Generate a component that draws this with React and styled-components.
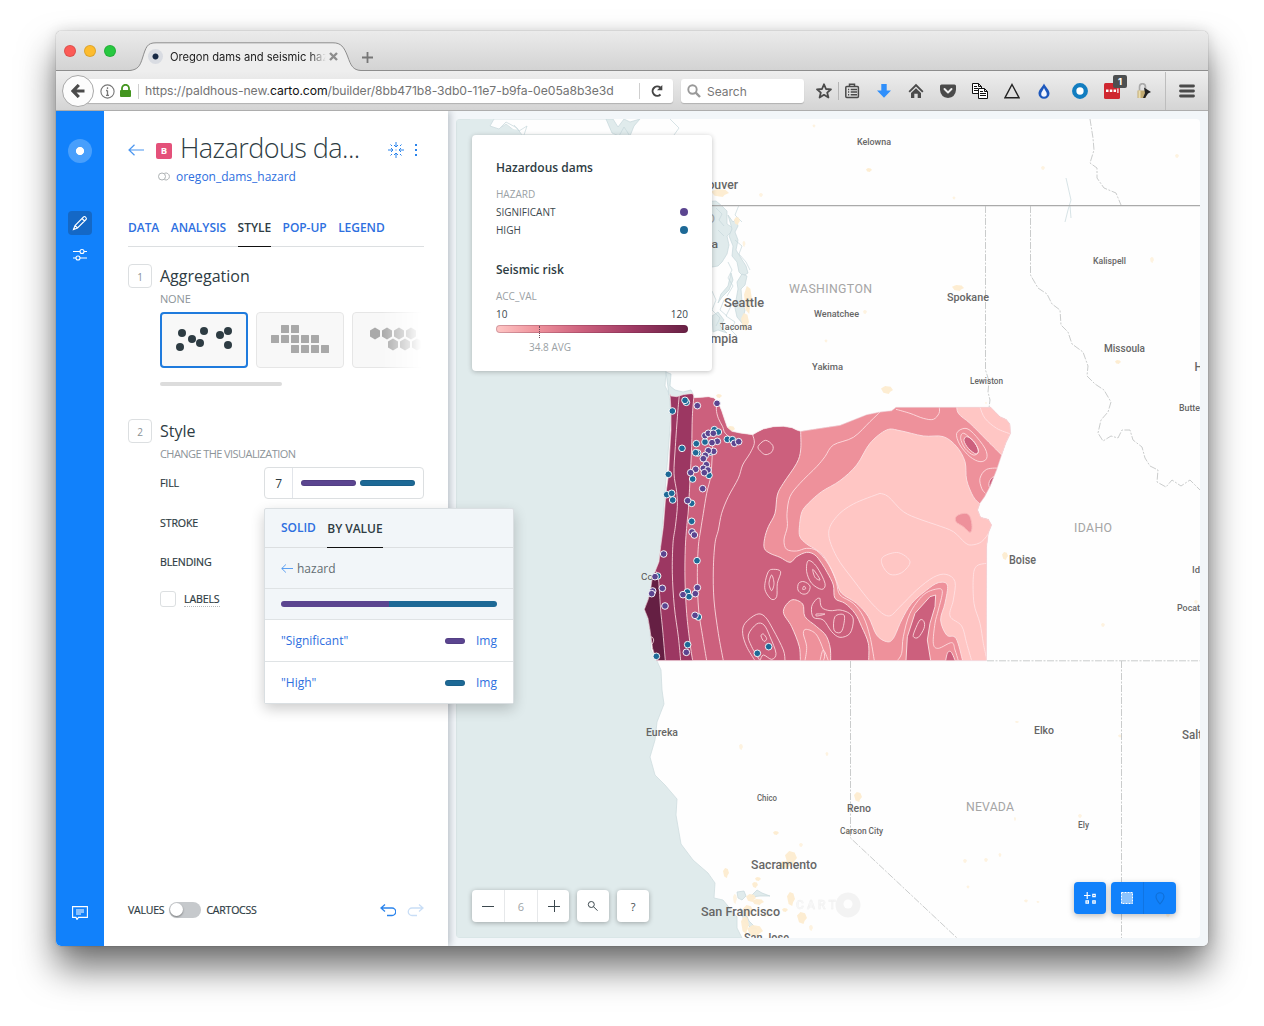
import React from "react";
import styled, { createGlobalStyle, css } from "styled-components";

const PURPLE = "#5b4590";
const TEAL = "#1d6996";
const BLUE = "#1181fb";
const LINK = "#2e6fe0";
const sans = `"Open Sans", "Noto Sans", sans-serif`;
const system = `Inter, "Liberation Sans", sans-serif`;

const Global = createGlobalStyle`
  * { box-sizing: border-box; }
  html, body { margin: 0; background: #fff; }
  body { height: 1026px; overflow: hidden; font-family: ${sans}; color: #2e3c43; }
  svg { display: block; flex: none; }
`;

const Desktop = styled.main`
  width: 1264px;
  height: 1026px;
  padding: 31px 56px 0;
`;

const Window = styled.div`
  width: 1152px;
  height: 915px;
  display: flex;
  flex-direction: column;
  border-radius: 5px;
  box-shadow: 0 0 1px rgba(0, 0, 0, 0.55), 0 0 14px rgba(0, 0, 0, 0.12), 0 22px 36px rgba(0, 0, 0, 0.56);
`;

/* ---------- browser chrome ---------- */

const TitleBar = styled.div`
  height: 40px;
  flex: none;
  display: flex;
  align-items: flex-end;
  border-radius: 5px 5px 0 0;
  border-bottom: 1px solid #8d8d8d;
  background: linear-gradient(#ebebeb, #d3d3d3);
  font-family: ${system};
`;

const Lights = styled.div`
  display: flex;
  gap: 8px;
  width: 74px;
  padding: 0 0 13px 8px;
`;

const Light = styled.i`
  width: 12px;
  height: 12px;
  border-radius: 50%;
  background: ${(p) => p.$color};
  border: 1px solid rgba(0, 0, 0, 0.12);
`;

const BrowserTab = styled.div`
  position: relative;
  width: 232px;
  height: 29px;
  margin-bottom: -1px;
  display: flex;
  align-items: center;
  padding-left: 18px;
  > * { position: relative; }
  > svg:first-child { position: absolute; left: 0; top: 0; }
`;

const Favicon = styled.i`
  width: 15px;
  height: 15px;
  margin-right: 7px;
  border-radius: 50%;
  background: radial-gradient(circle, #162945 0 2.6px, #d9dce2 3.4px);
`;

const TabTitle = styled.span`
  width: 159px;
  white-space: nowrap;
  font-size: 11.2px;
  letter-spacing: -0.04px;
  color: #222;
  mask-image: linear-gradient(90deg, #000 88%, transparent 98%);
`;

const NewTab = styled.div`
  padding: 0 0 7px;
`;

const Toolbar = styled.div`
  height: 40px;
  flex: none;
  display: flex;
  align-items: center;
  padding: 1px 0 0 6px;
  background: linear-gradient(#eeeeee, #d4d4d4);
  border-bottom: 1px solid #adadad;
  font-family: ${system};
`;

const Back = styled.div`
  width: 32px;
  height: 32px;
  border-radius: 50%;
  display: grid;
  place-items: center;
  border: 1px solid #a9a9a9;
  background: #fcfcfc;
  z-index: 1;
`;

const Address = styled.div`
  height: 24px;
  width: 589px;
  margin-left: -10px;
  padding-left: 16px;
  display: flex;
  align-items: center;
  border-radius: 3px;
  background: #fff;
  box-shadow: 0 1px 1px rgba(0, 0, 0, 0.18);
`;

const Url = styled.span`
  width: 500px;
  padding-left: 6px;
  font-size: 12.2px;
  line-height: 22px;
  letter-spacing: -0.07px;
  color: #737373;
  white-space: nowrap;
  b { font-weight: 400; color: #111; }
`;

const Divider = styled.i`
  width: 1px;
  height: ${(p) => p.$h || 16}px;
  margin: 0 ${(p) => p.$gap || 0}px;
  background: ${(p) => p.$color || "#cfcfcf"};
`;

const Search = styled.div`
  width: 123px;
  height: 24px;
  margin: 0 8px;
  padding-left: 6px;
  display: flex;
  gap: 6px;
  align-items: center;
  background: #fff;
  border-radius: 3px;
  box-shadow: 0 1px 1px rgba(0, 0, 0, 0.18);
  font-size: 12px;
  color: #777;
`;

const Tool = styled.div`
  position: relative;
  width: ${(p) => p.$w || 32}px;
  margin-left: ${(p) => p.$ml || 0}px;
  height: 32px;
  display: grid;
  place-items: center;
`;

const Count = styled.span`
  position: absolute;
  top: 0;
  right: 1px;
  width: 14px;
  height: 13px;
  border-radius: 2px;
  background: #4d4f50;
  color: #fff;
  font: 700 9.5px/13px ${system};
  text-align: center;
`;

/* ---------- app shell ---------- */

const Body = styled.div`
  flex: 1;
  min-height: 0;
  display: flex;
  background: #f2f6f9;
  border-radius: 0 0 5px 5px;
`;

const Rail = styled.nav`
  width: 48px;
  display: flex;
  flex-direction: column;
  align-items: center;
  padding: 28px 0 21px;
  background: ${BLUE};
  border-radius: 0 0 0 5px;
`;

const Logo = styled.i`
  width: 24px;
  height: 24px;
  border-radius: 50%;
  background: radial-gradient(circle, #fff 0 3.7px, #489ffc 4.4px);
  margin-bottom: 48px;
`;

const RailButton = styled.div`
  width: 24px;
  height: 24px;
  display: grid;
  place-items: center;
  margin-bottom: 8px;
  border-radius: 4px;
  background: ${(p) => (p.$active ? "#1468c6" : "none")};
  ${(p) => p.$last && css`margin: auto 0 0;`}
`;

const Panel = styled.section`
  position: relative;
  z-index: 2;
  width: 344px;
  padding: 20px 24px 0;
  display: flex;
  flex-direction: column;
  background: #fff;
  box-shadow: 2px 0 7px rgba(0, 20, 40, 0.24);
  clip-path: inset(0 -80px 0 0);
`;

const Heading = styled.header`
  height: 34px;
  display: flex;
  align-items: center;
  > svg { margin-top: 4px; }
`;

const Letter = styled.span`
  width: 16px;
  height: 16px;
  margin: 5px 8px 0 12px;
  border-radius: 2px;
  background: #e4517a;
  color: #fff;
  font: 700 9.5px/16px ${sans};
  text-align: center;
`;

const Title = styled.h1`
  width: 208px;
  margin: 0;
  font: 300 27px/34px ${sans};
  letter-spacing: -0.56px;
  color: #2e3c43;
  white-space: nowrap;
`;

const Source = styled.div`
  display: flex;
  align-items: center;
  gap: 6px;
  height: 20px;
  margin-top: 1px;
  padding-left: 30px;
  font-size: 12px;
  color: ${LINK};
`;

const Tabs = styled.div`
  display: flex;
  gap: 11.5px;
  height: ${(p) => p.$h || 38}px;
  padding: 0 ${(p) => p.$pad || 0}px;
  border-bottom: 1px solid #dcdfe1;
`;

const Tab = styled.span`
  height: ${(p) => p.$h || 38}px;
  line-height: ${(p) => p.$h || 38}px;
  font-size: 12px;
  font-weight: 600;
  letter-spacing: -0.05px;
  font-kerning: normal;
  white-space: nowrap;
  color: ${(p) => (p.$active ? "#2e3c43" : LINK)};
  border-bottom: ${(p) => (p.$active ? "1px solid #111" : "0")};
`;

const TallTab = styled(Tab)`
  height: 61px;
  padding-top: 33px;
  line-height: 18px;
`;

const Section = styled.div`
  display: grid;
  grid-template-columns: 24px 264px;
  column-gap: 8px;
  margin-top: ${(p) => p.$mt}px;
`;

const Step = styled.span`
  width: 24px;
  height: 24px;
  border: 1px solid #dcdfe1;
  border-radius: 4px;
  font-size: 10px;
  line-height: 24px;
  text-align: center;
  color: #8a9196;
`;

const SectionTitle = styled.h2`
  margin: 0;
  font-weight: 400;
  font-size: 16px;
  line-height: 24px;
  letter-spacing: 0;
`;

const Caption = styled.div`
  font-size: 11px;
  line-height: 16px;
  margin-top: 3px;
  letter-spacing: ${(p) => p.$track || -0.16}px;
  color: #8d9499;
`;

const Cards = styled.div`
  display: flex;
  gap: 8px;
  height: 56px;
  margin-top: 5px;
  overflow: hidden;
  mask-image: linear-gradient(90deg, #000 84%, transparent 99%);
`;

const Card = styled.div`
  width: 88px;
  height: 56px;
  flex: none;
  border-radius: 4px;
  background: #f8f8f8;
  border: ${(p) => (p.$active ? "2px solid #1f7bdd" : "1px solid #e6e6e6")};
  display: grid;
  place-items: center;
`;

const Thumb = styled.i`
  display: block;
  width: 122px;
  height: 4px;
  margin-top: 14px;
  border-radius: 2px;
  background: #dcdcdc;
`;

const Field = styled.div`
  height: ${(p) => p.$h || 40}px;
  display: flex;
  align-items: center;
  font-size: 10.6px;
  font-weight: 500;
  letter-spacing: -0.13px;
  -webkit-text-stroke: 0.2px currentColor;
`;

const FieldName = styled.span`
  width: 104px;
`;

const FillInput = styled.div`
  width: 160px;
  height: 32px;
  display: flex;
  align-items: center;
  border: 1px solid #dcdfe1;
  border-radius: 4px;
  gap: 4px;
  -webkit-text-stroke: 0;
`;

const FillSize = styled.span`
  width: 28px;
  height: 30px;
  margin-right: 4px;
  line-height: 31px;
  text-align: center;
  font-size: 12px;
  border-right: 1px solid #e2e5ea;
`;

const Bar = styled.i`
  width: ${(p) => p.$w}px;
  height: 6px;
  border-radius: 3px;
  background: ${(p) => p.$color};
  box-shadow: inset 0 0 0 1px rgba(0, 0, 0, 0.08);
`;

const Checkbox = styled.i`
  width: 16px;
  height: 16px;
  border: 1px solid #dcdfe1;
  border-radius: 3px;
  margin-right: 8px;
`;

const Hinted = styled.span`
  line-height: 14px;
  border-bottom: 1px dotted #b5babd;
`;

const Footer = styled.footer`
  display: flex;
  align-items: center;
  margin-top: auto;
  height: 24px;
  margin-bottom: 24px;
  font-size: 10.5px;
  font-weight: 500;
  letter-spacing: -0.2px;
  -webkit-text-stroke: 0.2px currentColor;
`;

const Switch = styled.i`
  width: 32px;
  height: 16px;
  margin: 0 5px;
  border-radius: 8px;
  background: #c6c9cc;
  &::before {
    content: "";
    display: block;
    width: 13px;
    height: 13px;
    margin: 1px;
    border-radius: 50%;
    background: #fff;
    box-shadow: 0 1px 2px rgba(0, 0, 0, 0.4);
  }
`;

const History = styled.div`
  margin-left: auto;
  display: flex;
  gap: 11px;
`;

const Popover = styled.div`
  position: absolute;
  left: 160px;
  top: 397px;
  width: 250px;
  height: 196px;
  border: 1px solid #dadfe2;
  border-radius: 2px;
  background: #f2f6f9;
  box-shadow: 0 5px 14px rgba(0, 0, 0, 0.2);
`;

const PopRow = styled.div`
  height: ${(p) => p.$h}px;
  padding: 0 16px;
  display: flex;
  align-items: center;
  gap: ${(p) => p.$gap || 0}px;
  border-bottom: ${(p) => (p.$last ? 0 : "1px solid #dfe3e5")};
  background: ${(p) => (p.$white ? "#fff" : "none")};
  font-size: 12px;
  color: ${(p) => (p.$white ? LINK : "#636d72")};
`;

const Ramp = styled.i`
  width: 216px;
  height: 6px;
  border-radius: 3px;
  background: linear-gradient(90deg, ${PURPLE} 50%, ${TEAL} 50%);
`;

const Value = styled.span`
  flex: 1;
`;

/* ---------- map ---------- */

const MapFrame = styled.section`
  position: relative;
  width: 744px;
  height: 819px;
  margin: 8px;
  overflow: hidden;
  border-radius: 4px;
  background: #fefefe;
  > svg { font-family: Roboto, "Liberation Sans", sans-serif; }
`;

const Legend = styled.aside`
  position: absolute;
  left: 16px;
  top: 16px;
  width: 240px;
  height: 236px;
  padding: 23px 24px;
  border-radius: 4px;
  background: #fff;
  box-shadow: 0 1px 5px rgba(0, 0, 0, 0.24);
`;

const LegendTitle = styled.h3`
  margin: 0 0 7px;
  font-size: 12px;
  line-height: 20px;
  font-weight: 600;
`;

const LegendGap = styled.div`
  height: 21px;
`;

const LegendRow = styled.div`
  height: 18px;
  display: flex;
  align-items: center;
  justify-content: space-between;
  font-size: 10px;
  color: ${(p) => (p.$muted ? "#9aa1a5" : "#3c484e")};
`;

const Dot = styled.i`
  width: 8px;
  height: 8px;
  border-radius: 50%;
  background: ${(p) => p.$color};
`;

const RiskRamp = styled.div`
  height: 8px;
  margin-top: 2px;
  border-radius: 4px;
  border: 1px solid rgba(90, 30, 60, 0.25);
  background: linear-gradient(90deg, #ffc6c4, #ee919b 22%, #cc607d 45%, #9e3963 72%, #672044) border-box;
`;

const Average = styled.div`
  width: 48px;
  margin-left: 30px;
  font-size: 10px;
  line-height: 14px;
  text-align: center;
  white-space: nowrap;
  color: #9aa1a5;
  &::before {
    content: "";
    display: block;
    height: 12px;
    margin: -7px 0 2px 13px;
    border-left: 1px dotted #6b4a58;
  }
`;

const Controls = styled.div`
  position: absolute;
  bottom: 16px;
  left: 16px;
  display: flex;
  gap: 8px;
`;

const ControlGroup = styled.div`
  display: flex;
  height: 32px;
  border-radius: 4px;
  background: #fff;
  box-shadow: 0 1px 5px rgba(0, 0, 0, 0.3);
  font-size: 11px;
`;

const Control = styled.span`
  width: ${(p) => p.$w || 32}px;
  display: grid;
  place-items: center;
  color: ${(p) => (p.$muted ? "#a0a5a8" : "#3c484e")};
  & + & { border-left: 1px solid #e6e8ea; }
`;

const Modes = styled.div`
  position: absolute;
  right: 24px;
  bottom: 24px;
  display: flex;
  gap: 5px;
`;

const ModeGroup = styled.div`
  display: flex;
  height: 32px;
  border-radius: 4px;
  background: ${BLUE};
  box-shadow: 0 2px 6px rgba(0, 0, 0, 0.26);
`;

const Mode = styled.span`
  width: ${(p) => p.$w || 32}px;
  display: grid;
  place-items: center;
  & + & { border-left: 1px solid #1074e2; }
`;

/* smooth curve through a list of points, closed or open */
function smooth(points, close = true) {
  const n = points.length;
  const at = (i) => (close ? points[(i + n) % n] : points[Math.max(0, Math.min(n - 1, i))]);
  let d = `M${points[0][0]} ${points[0][1]}`;
  const last = close ? n : n - 1;
  for (let i = 0; i < last; i++) {
    const [p0, p1, p2, p3] = [at(i - 1), at(i), at(i + 1), at(i + 2)];
    d += `C${p1[0] + (p2[0] - p0[0]) / 6} ${p1[1] + (p2[1] - p0[1]) / 6} ${p2[0] - (p3[0] - p1[0]) / 6} ${p2[1] - (p3[1] - p1[1]) / 6} ${p2[0]} ${p2[1]}`;
  }
  return close ? d + "Z" : d;
}
const pts = (s) => s.split(" ").map((p) => p.split(",").map(Number));
const line = (s) => smooth(pts(s), false);
const blob = (s) => smooth(pts(s), true);

const OREGON =
  "M90 42L93 48L110 50L130 44L158 40L163 53L185 52L205 50L222 54L234 66L245 92L255 122L262 142L276 154L300 159L338 164L352 156L370 147L400 140L430 139L456 143L470 150L482 154L540 145L600 136L640 120L680 104L720 96L755 92L768 82L1052 82L1066 96L1080 110L1098 118L1110 132L1112 160L1098 188L1085 225L1070 270L1050 320L1034 350L1020 370L1013 390L1022 412L1045 418L1055 435L1045 460L1040 500L1039 842L50 842L38 806L30 750L24 715L13 688L24 660L30 640L36 600L48 568L57 545L62 500L70 440L78 340L86 280L90 200L93 150L93 90Z";

const LINE_A = "118,45 113,100 106,200 102,280 110,335 112,380 106,440 99,490 97,580 103,680 115,770 122,842";
const LINE_B = "162,45 157,110 155,200 150,300 145,390 142,420 136,500 135,600 140,700 150,790 158,842";
const LINE_C = "218,190 216,240 212,290 200,340 190,400 182,450 175,500 172,590 176,690 188,770 200,842";
const LINE_D = "338,164 343,190 330,220 308,255 295,295 265,350 245,400 235,450 225,490 220,570 222,660 235,760 250,842";

const MEDIUM =
  line("482,154 482,210 470,250 430,310 412,345 405,400 385,440 374,475 373,505 390,520 420,532 450,547 470,530 500,517 525,525 545,550 562,578 580,615 585,655 615,670 645,700 665,740 685,790 686,842") +
  "L798 842L802 770L825 700L870 650L887 645L885 680L870 730L862 780L872 842L1080 842L1180 400L1160 20L482 20Z";

const LIGHT =
  line("479,430 486,395 505,370 545,335 600,302 650,255 690,190 740,150 780,152 850,168 910,170 950,200 975,245 980,300 1000,350 1022,374") +
  "L1070 374L1070 842L968 842" +
  line("968,842 948,775 920,765 902,720 915,670 922,615 895,608 860,630 815,670 785,720 760,775 740,785 710,765 685,710 650,670 605,640 590,605 570,560 552,530 530,510 500,492 479,468 479,430").replace("M968 842", "L968 842") +
  "Z";

const CONTOURS = [
  LINE_A, LINE_B, LINE_C, LINE_D,
  "232,62 229,88 235,115 248,140 256,160 285,182 300,184",
  "720,96 690,125 640,172 580,195 555,230 530,260 480,310 450,350 441,400 442,440 432,480 440,508 470,513 500,505 530,512 560,545 580,580 590,610 600,645 640,670 670,710 690,770 703,842",
  "720,340 640,372 590,410 566,460 590,530 640,600 700,675 745,708 780,680 830,630 880,592 918,583 945,605 940,660 930,708 965,738 980,790 995,842",
  "720,340 745,350 790,395 840,418 890,435 940,455 975,488 995,495 1025,485 1050,455",
  "768,88 810,100 850,115 880,118 897,100 898,82",
  "1020,82 1035,115 1070,145 1112,162",
  "1085,264 1040,268 1020,295 1025,325 1036,340",
  "1039,550 1010,558 1000,590 1002,670 1020,730 1030,790 1039,832",
  "772,842 785,820 790,770 810,700 850,645 890,627 907,635 895,690 885,730 880,790 895,805 935,788 945,810 955,842",
  "345,842 320,800 308,760 315,730 350,703 375,710 400,750 430,810 435,842",
  "360,842 335,800 325,765 350,732 372,735 390,770 408,820 395,838 370,825 360,842",
  "495,842 500,800 490,760 500,748 530,765 553,820 550,842",
  "540,655 530,657 515,680 520,712 550,720 575,755 600,772 630,760 640,720 628,700 600,690 570,692 545,682 540,655",
  "528,702 555,702 530,708 528,702",
  "540,842 550,810 565,842",
];

const RINGS = [
  "376,181 398,196 396,215 378,224 364,216 354,200",
  "400,568 422,575 412,610 410,650 395,658 377,635 375,610 385,575",
  "395,585 402,610 395,632 387,610",
  "505,542 530,560 555,610 545,628 515,610 500,575",
  "518,568 530,582 540,600 525,592",
  "492,605 510,618 504,638 488,642 474,630 476,610",
  "492,618 497,626 488,628",
  "730,530 775,518 810,545 785,578 750,583 727,555",
  "585,710 612,705 610,740 600,758 582,750",
  "840,720 825,750 820,770 835,772 852,745 852,725",
  "975,145 950,160 960,195 990,230 1020,245 1040,235 1035,205 1000,160",
  "972,160 962,175 975,205 1000,225 1015,215 1005,190",
  "35,770 41,780 36,792 32,780",
  "370,762 380,776 372,784 363,768",
];

const TEAL_DAMS = pts(
  "97,93 139,67 135,61 126,205 169,191 195,186 223,149 235,156 262,178 277,179 173,219 167,218 212,216 207,286 158,297 85,283 80,344 95,340 98,360 155,370 155,424 171,542 53,588 142,636 147,650 175,711 143,794 49,829 386,800 352,820"
);
const PURPLE_DAMS = pts(
  "172,77 231,70 195,167 205,160 220,160 232,184 216,188 283,190 296,185 221,214 205,212 196,226 190,236 199,254 190,265 204,270 193,278 167,268 152,278 188,326 143,362 156,456 163,465 71,522 45,590 38,633 35,641 67,625 75,678 172,623 166,641 129,644 165,706 139,817"
);

/* text, x, baseline, width, size */
const PLACES = [
  ["Kelowna", 857, 145, 34, 9.8],
  ["Vancouver", 680, 189, 58, 12.3],
  ["Victoria", 676, 248, 42, 11.3],
  ["Seattle", 724, 307, 40, 13],
  ["Tacoma", 720, 330, 32, 9.8],
  ["Olympia", 693, 343, 45, 12],
  ["Wenatchee", 814, 317, 45, 9.8],
  ["Yakima", 812, 370, 31, 9.8],
  ["Spokane", 947, 301, 42, 11.3],
  ["Lewiston", 970, 384, 33, 9.8],
  ["Kalispell", 1093, 264, 33, 9.8],
  ["Missoula", 1104, 352, 41, 11.3],
  ["H", 1194.5, 371, 8, 12.3],
  ["Butte", 1179, 411, 21, 9.8],
  ["Boise", 1009, 564, 27, 12.3],
  ["Id", 1192, 573, 8, 9.8],
  ["Pocat", 1177, 611, 23, 9.8],
  ["Salt", 1182, 739, 20, 12.3],
  ["Elko", 1034, 734, 20, 11.3],
  ["Ely", 1078, 828, 11, 9.8],
  ["Reno", 847, 812, 24, 11.3],
  ["Carson City", 840, 834, 43, 9.8],
  ["Chico", 757, 801, 20, 9.8],
  ["Eureka", 646, 736, 32, 11.3],
  ["Sacramento", 751, 869, 66, 12.3],
  ["San Francisco", 701, 916, 79, 13],
  ["San Jose", 744, 942, 45, 12.3],
];
const STATES = [
  ["WASHINGTON", 789, 293, 83],
  ["IDAHO", 1074, 532, 38],
  ["NEVADA", 966, 811, 48],
];

/* built-up areas: x, y, half width, half height */
const TOWNS = [
  [748, 300, 4, 14], [745, 322, 4, 9], [720, 193, 9, 4], [737, 221, 3, 4], [761, 195, 2, 2], [744, 244, 1.5, 3], [887, 390, 6, 4],
  [869, 170, 3, 2], [1043, 168, 2, 2], [1177, 156, 2, 2], [954, 198, 1.5, 1.5], [814, 126, 1.5, 1.5], [958, 288, 6, 3], [1005, 556, 3, 4],
  [1152, 260, 2, 3], [1118, 362, 3, 2], [719, 396, 3, 2], [731, 429, 4, 3], [986, 403, 1, 1], [865, 312, 2, 2], [826, 341, 1.5, 1.5],
  [741, 747, 2, 3], [827, 754, 1.5, 2], [776, 833, 3, 2], [791, 858, 6, 7], [785, 865, 6, 4], [801, 845, 2, 2], [726, 873, 3, 5],
  [758, 879, 3, 2], [755, 885, 3, 3], [735, 899, 2, 5], [751, 898, 5, 4], [758, 902, 6, 3], [748, 911, 5, 6], [791, 899, 4, 7],
  [802, 918, 5, 6], [811, 928, 2, 3], [785, 910, 3, 2], [745, 925, 4, 9], [755, 931, 8, 6], [765, 915, 2, 2], [858, 797, 4, 5], [849, 832, 3, 3],
  [986, 860, 2, 2], [1000, 855, 1.5, 2], [965, 861, 2, 2], [968, 887, 1.5, 1.5], [1026, 901, 2, 1.5], [1038, 902, 1.5, 1],
  [1080, 816, 2, 2], [1017, 722, 2, 1], [1120, 736, 2, 1.5], [1103, 625, 2, 2], [1168, 915, 2, 2], [1196, 602, 2, 2], [1015, 819, 1, 2],
];

function MapCanvas() {
  return (
    <svg width="744" height="819" viewBox="456 119 744 819">
      <g fill="#e0ebec">
        <path d="M456 119H494L490 126L499 129L506 124L520 135H600L625 125L665 230L666 371L665 386L669 394L671 415L662 530L660 560L650 592L645 609L650 630L651 650L657 661L661 670L662 690L664 704L657 722L655 740L650 757L655 775L665 785L677 799L676 815L681 844L693 860L708 873L715 883L714 898L723 900L737 917L737 928L742 938H456Z" stroke="#cfdddf" strokeWidth="0.8" />
        <path d="M470 119L494 119L497 127L520 130L528 135H470Z" />
      </g>
      <path d="M494 119H607L612 131L618 135H522L517 128L506 122L499 129L490 126Z" fill="#fefefe" stroke="#cbdbde" strokeWidth="0.8" />
      <g fill="#e0ebec" stroke="#c6d7db" strokeWidth="0.7">
        <path d="M606 119L612 133L619 136L624 127L630 136L634 126L640 119L630 122L624 119L618 127L613 119Z" />
        <path d="M670 119L679 128L674 135" fill="none" />
        <path d="M514 125L519 131L527 126L524 135" fill="none" />
        <path d="M700 202L716 201L722 206L727 211L727 224L733 228L731 232L727 236L729 245L727 254L722 262L718 266L712 267H700Z" />
        <path d="M728 215L733 222L736 219L738 226L735 232L738 240L736 250L741 258L746 266L748 273L743 276L739 272L737 262L732 256L733 246L729 236L732 229Z" />
        <path d="M742 274L747 276L745 285L741 289L742 302L745 310L742 323L737 317L735 308L736 300L738 289L737 282Z" />
        <path d="M731 273L728 286L721 294L718 303L722 297L729 290L733 280Z" />
        <path d="M712 316L718 312L724 320L720 326L727 333L718 330L713 332Z" />
        <path d="M737 892L744 891L746 896L742 900L738 898Z" />
        <path d="M740 908L745 912L749 921L757 929L752 929L744 921Z" />
        <path d="M750 897L757 890L762 893L770 896L760 896Z" />
        <path d="M666 372L671 374L670 386L675 390L683 392L691 390L694 396L686 394L675 398L669 395Z" />
      </g>
      <g fill="none" stroke="#c6d7db" strokeWidth="0.7">
        <path d="M716 208L722 214L719 220L724 226M718 230L724 236M735 240L742 246L739 254L746 262L750 270M728 262L732 270L728 278L733 286L727 296" />
        <path d="M712 291L716 300L712 310L720 318L716 326M724 300L720 310L727 316M733 302L726 316L735 322L731 330L737 336M739 205L735 215L742 222" />
        <path d="M1066 178L1071 200L1068 210L1065 222M1070 206L1071 218" />
      </g>
      <g fill="#fdecd0">
        {TOWNS.map(([x, y, rx, ry], i) => (
          <path
            key={i}
            opacity={rx < 2.5 ? 0.65 : 0.95}
            d={`M${x - rx} ${y - ry * 0.4}L${x - rx * 0.3} ${y - ry}L${x + rx * 0.6} ${y - ry * 0.8}L${x + rx} ${y}L${x + rx * 0.5} ${y + ry * 0.5}L${x + rx * 0.3} ${y + ry}L${x - rx * 0.6} ${y + ry * 0.7}Z`}
          />
        ))}
      </g>
      <path d="M712 205.7H1200" stroke="#aaa" strokeWidth="1.3" />
      <g fill="none" stroke="#c4c6c6" strokeWidth="0.9" strokeDasharray="7 1.5 2 1.5">
        <path d="M985.5 206V370L989 381L988 392L990 400L989 408" />
        <path d="M1030.5 206V275L1038 288L1047 294L1052 304L1060 310L1061 325L1068 332L1072 344L1083 352L1088 366L1087 376L1095 384L1104 390L1111 402L1108 412L1101 420L1098 433L1103 441L1111 436L1118 438L1122 430L1130 430L1133 440L1142 447L1145 458L1150 466L1158 470L1157 482L1166 487L1172 480L1181 486L1190 480L1200 490" />
        <path d="M1090 119L1093 138L1094 150L1090 163L1097 168L1097 178L1104 188L1116 193L1121 205" />
        <path d="M987 660.8H1200M850.5 661V838L957 938M1121.5 661V938" />
      </g>
      <g transform="translate(640 380) scale(.33333)">
        <clipPath id="oregon"><path d={OREGON} /></clipPath>
        <g clipPath="url(#oregon)">
          <path d={OREGON} fill="#cc607d" />
          <path d={line(LINE_B) + "L0 842L0 0Z"} fill="#9c3762" />
          <path d={line("40,560 54,590 58,630 62,690 68,750 76,842") + "L0 842L0 560Z"} fill="#651f43" stroke="#f3d5dc" strokeWidth="2.5" />
          <g stroke="#fbe0e2" strokeWidth="2.8">
            <path d={MEDIUM} fill="#ee919b" />
            <path d={LIGHT} fill="#ffc6c4" />
            <path d={line("950,70 955,100 990,130 1040,180 1088,228") + "L1180 200L1180 60Z"} fill="#ffc6c4" />
            <path d={blob("455,660 488,672 495,710 530,740 560,770 572,820 560,870 490,870 478,800 455,740 430,695")} fill="#ee919b" />
            <path d={blob("980,170 972,182 985,205 1008,222 1015,210 1000,182")} fill="#cc607d" />
            <path d={blob("1062,292 1048,305 1050,325 1070,330")} fill="#cc607d" />
            <path d={blob("975,400 950,408 948,425 970,440 990,457 996,440 990,410")} fill="#ee919b" stroke="#f7b7b9" />
            <path d={blob("922,820 935,818 948,860 918,860")} fill="#cc607d" />
          </g>
          <g fill="none" stroke="#ffe4e6" strokeWidth="2.8" strokeOpacity="0.88">
            {CONTOURS.map((s, i) => <path key={i} d={line(s)} />)}
            {RINGS.map((s, i) => <path key={i} d={blob(s)} />)}
          </g>
        </g>
        <path d={OREGON} fill="none" stroke="#f3dfe4" strokeWidth="2" />
      </g>
      <text x="641" y="580" fontSize="9.8" fill="#555">Co</text>
      <g transform="translate(640 380) scale(.33333)" stroke="#fff" strokeWidth="2.8">
        <g fill={TEAL}>{TEAL_DAMS.map(([x, y], i) => <circle key={i} cx={x} cy={y} r="10" />)}</g>
        <g fill={PURPLE}>{PURPLE_DAMS.map(([x, y], i) => <circle key={i} cx={x} cy={y} r="10" />)}</g>
      </g>
      <g fill="#666" fontWeight="500">
        {PLACES.map(([t, x, y, w, s]) => (
          <text key={t} x={x} y={y} fontSize={s} textLength={w} lengthAdjust="spacingAndGlyphs">{t}</text>
        ))}
      </g>
      <g fill="#a5a5a5" fontSize="12.3">
        <text x="707" y="223">D</text>
        {STATES.map(([t, x, y, w]) => <text key={t} x={x} y={y} textLength={w}>{t}</text>)}
      </g>
      <g opacity="0.75">
        <text x="796" y="909" fontSize="12" fontWeight="700" fill="#f5f5f5" stroke="#ececec" strokeWidth="0.4" textLength="40">CART</text>
        <circle cx="848" cy="905" r="12.500" fill="#f0f0f0" />
        <circle cx="848" cy="904" r="4.500" fill="#fff" />
      </g>
    </svg>
  );
}

/* ---------- icons ---------- */

const Stroke = ({ w = 16, h = 16, box, color = "#4a4a4a", sw = 1.2, children, ...rest }) => (
  <svg width={w} height={h} viewBox={box || `0 0 ${w} ${h}`} fill="none" stroke={color} strokeWidth={sw} {...rest}>
    {children}
  </svg>
);

const BackArrow = ({ w = 16, h = 12 }) => (
  <Stroke w={w} h={h} box="0 0 16 12" color="#4b96f0"><path d="M16 6H1M6.5 .7L1 6L6.5 11.3" /></Stroke>
);

function ToolbarIcons() {
  return (
    <>
      <Tool $w={24}><Stroke sw={1.8} strokeLinejoin="round"><path d="M8 1.3L10 6L15 6.3L11.2 9.6L12.4 14.5L8 11.8L3.6 14.5L4.8 9.6L1 6.3L6 6Z" /></Stroke></Tool>
      <Divider $h={18} $color="#b5b5b5" $gap={1.5} />
      <Tool $w={24}>
        <Stroke sw={1.5}><rect x="1.8" y="3.5" width="12.6" height="11" rx="1" /><path d="M5.5 3V1.3H10.5V3M4 6.5H5.2M6.7 6.5H13M4 9H5.2M6.7 9H13M4 11.7H5.2M6.7 11.7H13" /></Stroke>
      </Tool>
      <Tool $ml={4}><svg width="16" height="16"><path d="M5.3 1H10.7V7.5H15L8 14.8L1 7.5H5.3Z" fill="#2f8ffb" /></svg></Tool>
      <Tool><svg width="16" height="16"><path d="M8 .8L15.5 8.3L14.2 9.6L8 3.5L1.8 9.6L.5 8.3Z" fill="#4a4a4a" /><path d="M8 5.2L13 10V15H9.7V10.8H6.3V15H3V10Z" fill="#4a4a4a" /></svg></Tool>
      <Tool><svg width="16" height="16"><path d="M1.500 1.500H14.500Q16 1.500 16 3V7Q15.500 14 8 15Q.5 14 0 7V3Q0 1.500 1.500 1.500Z" fill="#4a4a4a" /><path d="M4.500 6L8 9.500L11.500 6" fill="none" stroke="#eee" strokeWidth="1.900" strokeLinecap="round" strokeLinejoin="round" /></svg></Tool>
      <Tool>
        <Stroke color="#111" sw={1}><path fill="#fff" d="M.5 .5H6.500L9.500 3.500V10.500H.5ZM6.500 .5V3.500H9.500M2 3.500H5M2 5.500H6M2 7.500H6" /><path fill="#fff" d="M6.500 5.500H12.500L15.500 8.500V15.500H6.500ZM12.500 5.500V8.500H15.500M8 8.500H11M8 10.500H14M8 12.500H14" /></Stroke>
      </Tool>
      <Tool><Stroke color="#222" sw={1.4}><path d="M8 1.500L15 14.700H1Z" /></Stroke></Tool>
      <Tool><svg width="16" height="16"><path d="M8 .5C10 4.500 13.500 7 13.500 10.500A5.500 5.200 0 0 1 2.500 10.500C2.500 7 6 4.500 8 .5Z" fill="#1d58bd" /><path d="M8 5C9 7.500 10.800 9 10.800 11A2.800 2.700 0 0 1 5.200 11C5.200 9 7 7.500 8 5Z" fill="#f3f6ff" /></svg></Tool>
      <Tool $ml={4}><Stroke color="#127dc0" sw={4.3} fill="#fff"><circle cx="8" cy="8" r="5.800" /></Stroke></Tool>
      <Tool>
        <svg width="16" height="16"><rect width="16" height="16" rx="1.500" fill="#cf2730" /><path d="M2 6.500H4.500V9H2ZM5.800 6.500H8.300V9H5.800ZM9.600 6.500H12V9H9.600ZM13.300 5.500H14.500V10H13.300Z" fill="#fff" /></svg>
        <Count>1</Count>
      </Tool>
      <Tool>
        <svg width="16" height="16"><path d="M3.500 8V4A3 3.300 0 0 1 9.500 4V8" fill="none" stroke="#aaa" strokeWidth="1.600" /><path d="M1.500 7.500H10V15H1.500Z" fill="#c2ab72" /><path d="M2.500 7.500H4.500V15H2.500Z" fill="#eadcae" /><path d="M8 4.500L15 9L12 10.500L9 15H7L9 10Z" fill="#222" /></svg>
      </Tool>
      <Divider $h={38} $gap={5} $color="#bdbdbd" />
      <Tool><Stroke sw={2.8} strokeLinecap="round"><path d="M1.500 3H14.500M1.500 8H14.500M1.500 13H14.500" /></Stroke></Tool>
    </>
  );
}

function Chrome() {
  return (
    <>
      <TitleBar>
        <Lights><Light $color="#fc5b57" /><Light $color="#fdbc2f" /><Light $color="#27c840" /></Lights>
        <BrowserTab>
          <svg width="236" height="29">
            <path d="M0 28.500C8 27.500 10 24 12.500 16C16 5 17 .8 26 .8H203C211 .8 214 5 217.500 14C221 24 223 28 231 28.500V30H0Z" fill="#eeeeee" />
            <path d="M0 28.500C8 27.500 10 24 12.500 16C16 5 17 .8 26 .8H203C211 .8 214 5 217.500 14C221 24 223 28 231 28.500" fill="none" stroke="#8d8d8d" />
          </svg>
          <Favicon />
          <TabTitle>Oregon dams and seismic haz</TabTitle>
          <Stroke w={9} h={9} color="#8d8d8d" sw={2.4}><path d="M1 1L8 8M8 1L1 8" /></Stroke>
        </BrowserTab>
        <NewTab><Stroke w={11} h={11} color="#777" sw={1.8}><path d="M5.500 0V11M0 5.500H11" /></Stroke></NewTab>
      </TitleBar>
      <Toolbar>
        <Back><Stroke w={14} h={14} sw={3.2}><path d="M13.500 7H2M7.800 1L2 7L7.800 13" /></Stroke></Back>
        <Address>
          <Stroke w={15} h={15} color="#777" sw={1.1}><circle cx="7.500" cy="7.500" r="6.600" /><path d="M7.500 6.500V11.500M6 6.500H7.500M6 11.300H9M7.500 3.300V5" strokeWidth={1.3} /></Stroke>
          <svg width="23" height="14"><path d="M7 6V4.300A3.500 3.500 0 0 1 14 4.300V6" fill="none" stroke="#43951f" strokeWidth="1.800" /><rect x="5" y="6" width="11" height="7" rx="1" fill="#43951f" /></svg>
          <Divider $h={15} />
          <Url>https://paldhous-new.<b>carto.com</b>/builder/8bb471b8-3db0-11e7-b9fa-0e05a8b3e3d</Url>
          <Divider />
          <Tool $w={33}><Stroke w={14} h={14} color="#444" sw={2}><path d="M10.500 10.600A4.700 4.700 0 1 1 10.300 3.500" /><path d="M12.300 1V6.300H7Z" fill="#444" stroke="none" /></Stroke></Tool>
        </Address>
        <Search><Stroke w={14} h={14} color="#999" sw={1.9}><circle cx="5.500" cy="5.500" r="4.200" /><path d="M8.700 8.700L13 13" strokeWidth={2.4} /></Stroke>Search</Search>
        <ToolbarIcons />
      </Toolbar>
    </>
  );
}

const POINTS = [[22, 19], [20, 33], [32, 25], [40, 29], [44, 17], [60, 21], [68, 17], [68, 31]];
const SQUARES = [[10, 0], [20, 0], [0, 10], [10, 10], [20, 10], [30, 10], [40, 10], [20, 20], [30, 20], [40, 20], [50, 20]];
const HEXES = [[0, 0], [12, 0], [24, 0], [36, 0], [18, 11], [30, 11], [42, 11]];

function SidePanel() {
  return (
    <Panel>
      <Heading>
        <BackArrow />
        <Letter>B</Letter>
        <Title>Hazardous da...</Title>
        <Stroke color="#2b84ec" sw={1}><path d="M8 0V5M6 3L8 5L10 3M8 16V11M6 13L8 11L10 13M0 8H5M3 6L5 8L3 10M16 8H11M13 6L11 8L13 10" /><path d="M2.500 2.500L4 4M13.500 2.500L12 4M2.500 13.500L4 12M13.500 13.500L12 12M7.500 8H8.500" /></Stroke>
        <svg width="16" height="14" viewBox="-7 0 16 14" fill="#2b84ec"><path d="M4 1H6V3H4ZM4 6H6V8H4ZM4 11H6V13H4Z" /></svg>
      </Heading>
      <Source>
        <Stroke w={12} h={9} color="#a5a9ac" sw={0.9}><circle cx="4" cy="4.500" r="3.500" /><path d="M6.500 1.300A3.500 3.500 0 1 1 6.500 7.700" /></Stroke>
        oregon_dams_hazard
      </Source>
      <Tabs $h={61}>
        {["DATA", "ANALYSIS", "STYLE", "POP-UP", "LEGEND"].map((t) => (
          <TallTab key={t} $active={t === "STYLE"}>{t}</TallTab>
        ))}
      </Tabs>
      <Section $mt={17}>
        <Step>1</Step>
        <div>
          <SectionTitle>Aggregation</SectionTitle>
          <Caption>NONE</Caption>
          <Cards>
            <Card $active>
              <svg width="84" height="52" viewBox="2 2 84 52" fill="#2e3c43">{POINTS.map(([x, y]) => <circle key={x + "-" + y} cx={x} cy={y + 2} r="4" />)}</svg>
            </Card>
            <Card>
              <svg width="86" height="54" viewBox="1 1 86 54" fill="#a9a9a9">{SQUARES.map(([x, y]) => <rect key={x + "-" + y} x={15 + x} y={13 + y} width="8" height="8" rx="0.5" />)}</svg>
            </Card>
            <Card>
              <svg width="86" height="54" viewBox="1 1 86 54" fill="#a9a9a9">{HEXES.map(([x, y]) => <path key={x + "-" + y} transform={`translate(${23 + x} ${21.5 + y})`} d="M0 -6L5 -3V3L0 6L-5 3V-3Z" />)}</svg>
            </Card>
          </Cards>
          <Thumb />
        </div>
      </Section>
      <Section $mt={33}>
        <Step>2</Step>
        <div>
          <SectionTitle>Style</SectionTitle>
          <Caption $track={-0.57}>CHANGE THE VISUALIZATION</Caption>
          <Field $h={41}>
            <FieldName>FILL</FieldName>
            <FillInput><FillSize>7</FillSize><Bar $w={55} $color={PURPLE} /><Bar $w={55} $color={TEAL} /></FillInput>
          </Field>
          <Field $h={39}>STROKE</Field>
          <Field>BLENDING</Field>
          <Field $h={34}><Checkbox /><Hinted>LABELS</Hinted></Field>
        </div>
      </Section>
      <Footer>
        VALUES<Switch />CARTOCSS
        <History>
          <Stroke w={16} h={13} color="#2b84ec" sw={1.3}><path d="M1 4H12A3.700 3.700 0 0 1 12 11.500H7M5 .5L1 4L5 7.500" /></Stroke>
          <Stroke w={17} h={13} color="#c9def6" sw={1.3}><path d="M16 4H5A3.700 3.700 0 0 0 5 11.500H10M12 .5L16 4L12 7.500" /></Stroke>
        </History>
      </Footer>
      <Popover>
        <Tabs $h={39} $pad={16}><Tab>SOLID</Tab><Tab $active $h={39}>BY VALUE</Tab></Tabs>
        <PopRow $h={41} $gap={4}><BackArrow w={12} h={9} />hazard</PopRow>
        <PopRow $h={31}><Ramp /></PopRow>
        <PopRow $h={42} $white $gap={11}><Value>"Significant"</Value><Bar $w={20} $color={PURPLE} />Img</PopRow>
        <PopRow $h={41} $white $last $gap={11}><Value>"High"</Value><Bar $w={20} $color={TEAL} />Img</PopRow>
      </Popover>
    </Panel>
  );
}

export default function App() {
  return (
    <Desktop>
      <Global />
      <Window>
        <Chrome />
        <Body>
          <Rail>
            <Logo />
            <RailButton $active><Stroke color="#fff" sw={1.1}><path d="M1.500 14.500L3 10.500L11.500 2Q12.500 1 13.700 2.300Q15 3.500 14 4.500L5.500 13ZM3 10.500L5.500 13M10 3.500L12.500 6" /></Stroke></RailButton>
            <RailButton><Stroke color="#fff" sw={1.1}><path d="M1 4.500H8M12 4.500H15M1 11H4M8 11H15" /><circle cx="10" cy="4.500" r="2" /><circle cx="6" cy="11" r="2" /></Stroke></RailButton>
            <RailButton $last><Stroke w={16} h={14} color="#fff" sw={1.1}><path d="M.6 .6H15.400V11.400H6.500L5 13.500L4 11.400H.6ZM4 4H12M4 6H12M4 8H9" /></Stroke></RailButton>
          </Rail>
          <SidePanel />
          <MapFrame>
            <MapCanvas />
            <Legend>
              <LegendTitle>Hazardous dams</LegendTitle>
              <LegendRow $muted>HAZARD</LegendRow>
              <LegendRow>SIGNIFICANT<Dot $color={PURPLE} /></LegendRow>
              <LegendRow>HIGH<Dot $color={TEAL} /></LegendRow>
              <LegendGap />
              <LegendTitle>Seismic risk</LegendTitle>
              <LegendRow $muted>ACC_VAL</LegendRow>
              <LegendRow><span>10</span><span>120</span></LegendRow>
              <RiskRamp />
              <Average>34.8 AVG</Average>
            </Legend>
            <Controls>
              <ControlGroup>
                <Control $w={32}><Stroke w={12} h={12} color="#3c484e" sw={1}><path d="M0 6.500H12" /></Stroke></Control>
                <Control $w={33} $muted>6</Control>
                <Control $w={32}><Stroke w={12} h={12} color="#3c484e" sw={1}><path d="M0 6.500H12M6.500 0V12" /></Stroke></Control>
              </ControlGroup>
              <ControlGroup><Control><Stroke w={12} h={12} color="#3c484e" sw={1}><circle cx="4.300" cy="4.500" r="3" /><path d="M6.500 6.700L10.500 10.700" /></Stroke></Control></ControlGroup>
              <ControlGroup><Control>?</Control></ControlGroup>
            </Controls>
            <Modes>
              <ModeGroup><Mode><Stroke w={14} h={14} color="#fff" sw={1.2}><path d="M1 4.500H7.500M4.200 1V8M9.800 3.300H12.200V5.700H9.800ZM3 9.800H5.400V12.200H3ZM9.800 9.800H12.200V12.200H9.800Z" /></Stroke></Mode></ModeGroup>
              <ModeGroup>
                <Mode $w={32}><Stroke w={12} h={12} color="#fff" sw={1} strokeDasharray="2 1"><rect x=".5" y=".5" width="11" height="11" fill="#8cc3fd" /></Stroke></Mode>
                <Mode $w={33}><Stroke w={10} h={13} color="#0f6fd6" sw={1.1}><path d="M5 12Q1 7.500 1 4.800A4 4 0 0 1 9 4.800Q9 7.500 5 12Z" /></Stroke></Mode>
              </ModeGroup>
            </Modes>
          </MapFrame>
        </Body>
      </Window>
    </Desktop>
  );
}
